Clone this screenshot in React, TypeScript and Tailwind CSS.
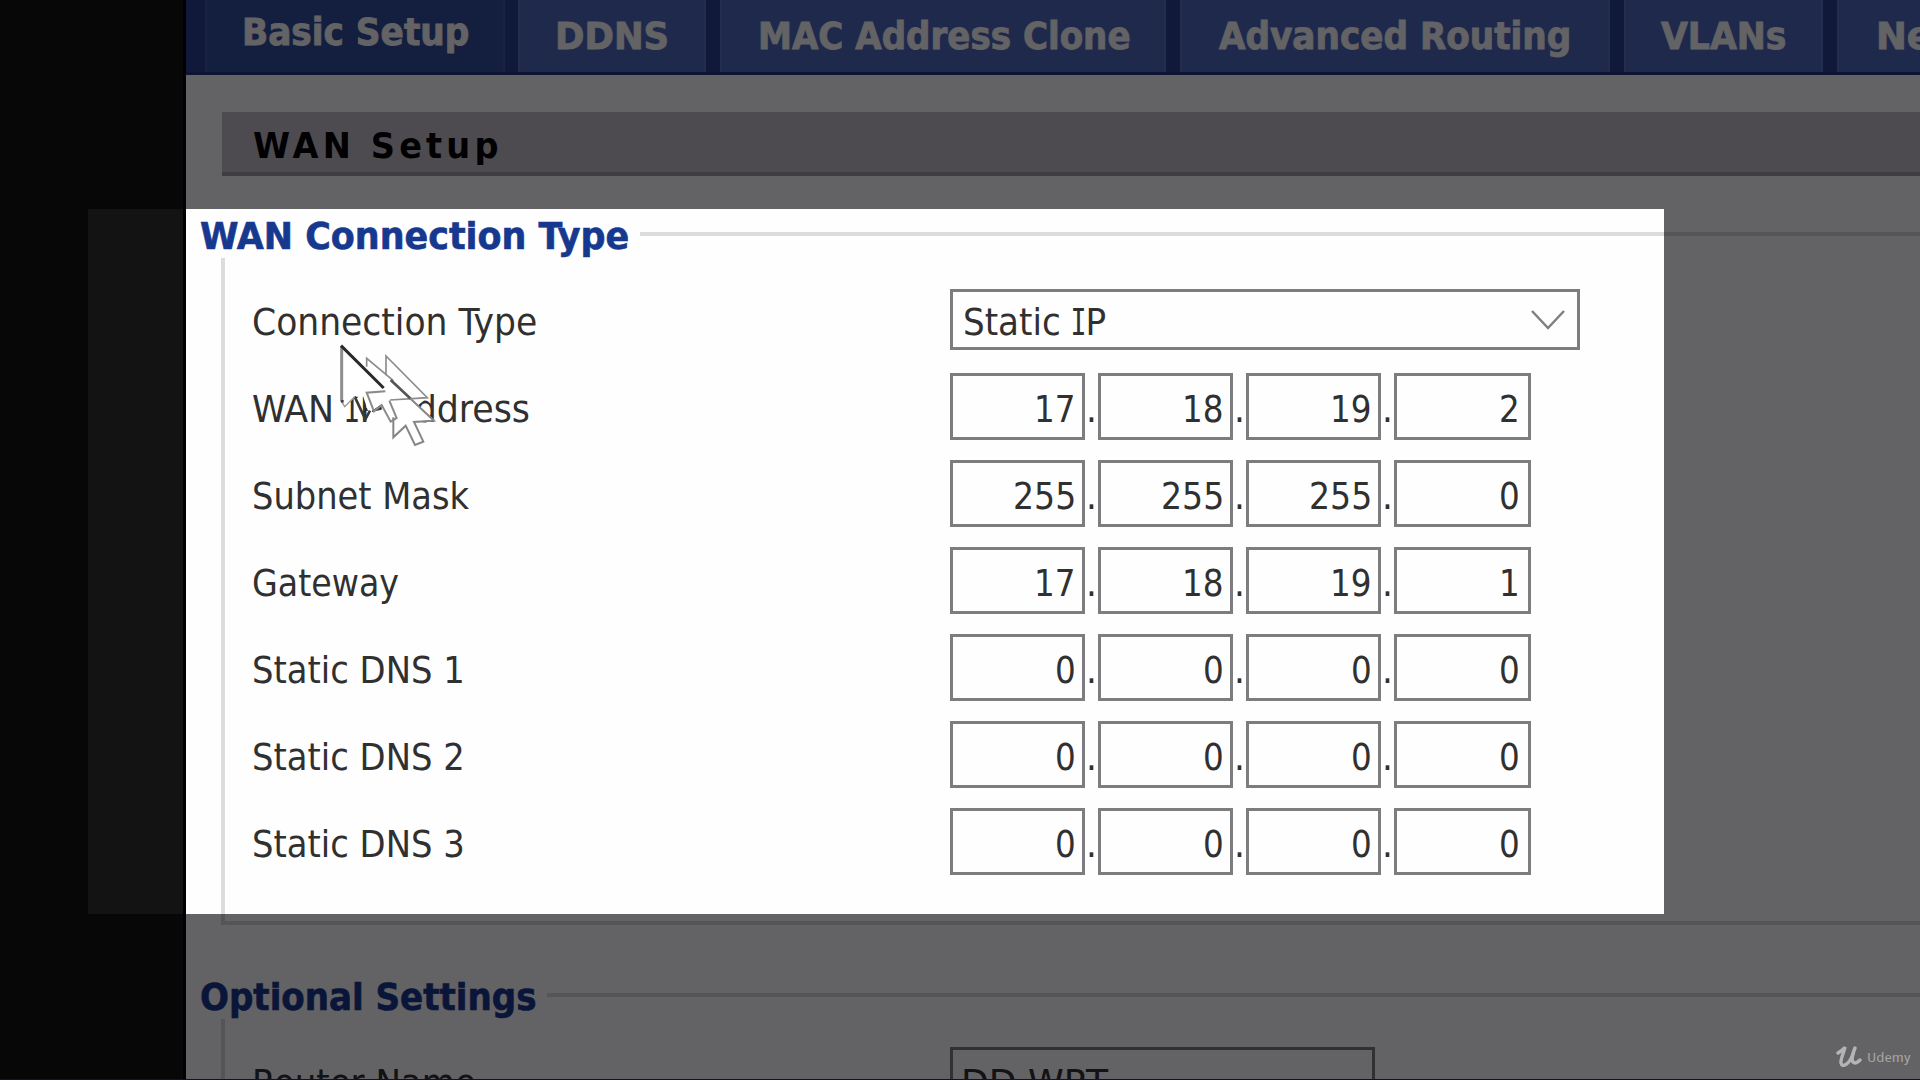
import { ReactNode, useLayoutEffect, useRef, useState } from "react";

/* Text squeezed or stretched horizontally so that it fills a given width. */
function Fit({ w, className = "", children }: { w: number; className?: string; children: ReactNode }) {
  const ref = useRef<HTMLSpanElement>(null);
  const [k, setK] = useState(1);
  useLayoutEffect(() => {
    if (ref.current) setK(w / ref.current.offsetWidth);
  }, [w]);
  return (
    <span className={"block shrink-0 whitespace-nowrap " + className} style={{ width: w }}>
      <span ref={ref} className="inline-block origin-left" style={{ transform: `scaleX(${k})` }}>
        {children}
      </span>
    </span>
  );
}

/* Capital I with serifs, as in Tahoma. */
function SerifI() {
  return (
    <span className="inline-flex w-[14px] justify-center">
      <span className="inline-block scale-x-[0.7] font-['DejaVu_Sans_Mono',monospace]">I</span>
    </span>
  );
}

const tabs = [
  { label: "DDNS", w: 188, pad: "pl-[35px]", tw: 114 },
  { label: "MAC Address Clone", w: 446, pad: "pl-[36px]", tw: 373 },
  { label: "Advanced Routing", w: 430, pad: "pl-[37px]", tw: 352 },
  { label: "VLANs", w: 199, pad: "pl-[35px]", tw: 125 },
  { label: "Networking", w: 300, pad: "pl-[37px]", tw: 240 },
];

function Tabs() {
  return (
    <nav className="flex h-[75px] w-[1734px] shrink-0 gap-[14px] overflow-hidden border-b-[3px] border-[#1d3a80] bg-[#274190] font-bold text-white [-webkit-text-stroke:0.8px_white]">
      <div className="-mr-px ml-[19px] h-full w-[300px] shrink-0 border-x-2 border-[#4059a0] bg-[#334f9c] pl-[35px] text-[37px] leading-[66px]">
        <Fit w={227}>Basic Setup</Fit>
      </div>
      {tabs.map((t) => (
        <div
          key={t.label}
          className={"h-full shrink-0 border-x-2 border-[#5b76c4] bg-[#4e6cc0] text-[37px] leading-[74px] " + t.pad}
          style={{ width: t.w }}
        >
          <Fit w={t.tw}>{t.label}</Fit>
        </div>
      ))}
    </nav>
  );
}

function Legend({ w, children }: { w: number; children: ReactNode }) {
  return (
    <div className="flex h-[49px] shrink-0 items-center pl-[14px]">
      <Fit
        w={w}
        className="pt-[5px] text-[38px] font-bold leading-[44px] text-[#17388f] [-webkit-text-stroke:0.6px_#17388f]"
      >
        {children}
      </Fit>
      <div className="ml-[11px] h-[4px] flex-1 bg-[#dddbde]" />
    </div>
  );
}

function Row({ label, w, children }: { label: ReactNode; w: number; children: ReactNode }) {
  return (
    <div className="flex h-[87px] shrink-0 items-center pl-[27px]">
      <div className="w-[698px] shrink-0 pt-[4px] text-[38px] leading-[48px]">
        <Fit w={w}>{label}</Fit>
      </div>
      {children}
    </div>
  );
}

const digitWidths = [0, 21, 42, 63];

function Octets({ values }: { values: string[] }) {
  return (
    <div className="flex">
      {values.map((v, i) => (
        <div key={i} className="flex">
          <div
            className={
              "flex h-[67px] justify-end border-[3px] border-[#7d7d7f] pt-[5px] text-[38px] leading-[56px] " +
              (i === 3 ? "w-[137px] pr-[8px]" : "w-[135px] pr-[6px]")
            }
          >
            <Fit w={digitWidths[v.length]}>{v}</Fit>
          </div>
          {i < 3 && <div className="w-[13px] pt-[8px] text-center text-[38px] leading-[56px]">.</div>}
        </div>
      ))}
    </div>
  );
}

const rows: { label: ReactNode; w: number; values: string[] }[] = [
  { label: <>WAN <SerifI />P Address</>, w: 278, values: ["17", "18", "19", "2"] },
  { label: "Subnet Mask", w: 217, values: ["255", "255", "255", "0"] },
  { label: "Gateway", w: 147, values: ["17", "18", "19", "1"] },
  { label: "Static DNS 1", w: 213, values: ["0", "0", "0", "0"] },
  { label: "Static DNS 2", w: 213, values: ["0", "0", "0", "0"] },
  { label: "Static DNS 3", w: 213, values: ["0", "0", "0", "0"] },
];

/* Mouse pointer with its motion trail. */
function PointerTrail() {
  return (
    <svg className="absolute left-[336px] top-[340px]" width="100" height="110" viewBox="228 30 300 330" fill="none">
      <path d="M242 48 V218 L256 230 L284 200 L310 200 L330 262 L344 246 L364 226 L392 275 L420 270 L502 203 L378 78 V130 L320 85Z" fill="#fff" />
      <path d="M392 150 L522 270 L462 275 L490 335 L465 345 L437 287 L400 322 L388 212Z" fill="#fff" />
      <path d="M284 200 L316 268 L330 242" stroke="#3a3a3a" strokeWidth="8" />
      <path d="M336 244 L362 226 L364 238Z" fill="#333" stroke="#333" strokeWidth="3" />
      <path d="M320 110 V85 L400 152" stroke="#8c8c8c" strokeWidth="5" />
      <path d="M378 136 V78 L502 203 L390 210" stroke="#8c8c8c" strokeWidth="5" />
      <path d="M245 50 V215" stroke="#8e8e8e" strokeWidth="9" />
      <path d="M241 208 L254 230 L284 200" stroke="#999" strokeWidth="4" />
      <path d="M243 210 h8 v8 h-8Z" fill="#444" />
      <path d="M376 184 L320 188 L342 244 L365 225 L392 275 L410 264 L388 212" stroke="#8a8a8a" strokeWidth="6" />
      <path d="M243 47 L371 174" stroke="#2a2a2a" strokeWidth="9" />
      <path d="M392 150 L452 206" stroke="#555" strokeWidth="8" />
      <path d="M450 205 L522 272 L462 276 L490 335 L465 345 L437 287 L400 322 V262" stroke="#868686" strokeWidth="6" />
    </svg>
  );
}

export default function App() {
  return (
    <div className="relative flex h-[1080px] w-[1920px] overflow-hidden bg-[#121312] font-['DejaVu_Sans_Condensed','DejaVu_Sans',sans-serif] [font-stretch:condensed] text-[#303030]">
      <div className="h-full w-[186px] shrink-0 border-r-[3px] border-black" />
      <main className="flex h-full w-[1734px] shrink-0 flex-col overflow-hidden bg-[#fefefe]">
        <Tabs />
        <div className="ml-[36px] mt-[37px] h-[64px] shrink-0 border-b-4 border-[#9f9f9f] bg-[#c7c4c8] pl-[31px] pt-[3px] text-[36px] font-bold leading-[62px] text-black">
          <Fit w={250} className="tracking-[4px]">WAN Setup</Fit>
        </div>
        <div className="h-[33px] shrink-0" />

        <Legend w={429}>WAN Connection Type</Legend>
        <section className="ml-[35px] flex h-[667px] shrink-0 flex-col border-b-4 border-l-[4px] border-[#dddbde] pt-[18px]">
          <Row label="Connection Type" w={285}>
            <div className="flex h-[61px] w-[630px] items-center justify-between border-[3px] border-[#7d7d7f] pl-[10px] pr-[11px] text-[38px] leading-[56px]">
              <Fit w={143} className="pt-[5px]">
                Static <SerifI />P
              </Fit>
              <svg width="36" height="24" viewBox="0 0 36 24" fill="none" stroke="#808080" strokeWidth="2.5">
                <path d="M2 3 L18 20 L34 3" />
              </svg>
            </div>
          </Row>
          {rows.map((r, i) => (
            <Row key={i} label={r.label} w={r.w}>
              <Octets values={r.values} />
            </Row>
          ))}
        </section>

        <div className="h-[45px] shrink-0" />
        <Legend w={336}>Optional Settings</Legend>
        <section className="ml-[35px] flex shrink-0 flex-col border-l-[4px] border-[#dddbde] pt-[18px]">
          <Row label="Router Name" w={224}>
            <div className="h-[67px] w-[425px] border-[3px] border-[#7d7d7f] pl-[8px] pt-[5px] text-[38px] leading-[56px]">
              <Fit w={147}>DD-WRT</Fit>
            </div>
          </Row>
        </section>
      </main>

      <PointerTrail />

      {/* Spotlight: everything outside this box is dimmed */}
      <div className="absolute left-[88px] top-[209px] h-[705px] w-[1576px] shadow-[0_0_0_2000px_rgba(1,0,3,0.615)]" />

      <div className="absolute bottom-[11px] right-[9px] flex items-center gap-[5px] text-[#b4b3b6]">
        <svg width="26" height="24" viewBox="0 0 26 24" fill="none" stroke="currentColor" strokeLinecap="round">
          <path d="M2 8 C5 6 8 4 9 2 C8 8 4 14 5 18 C6 23 13 20 17 9" strokeWidth="3.4" />
          <path d="M19 3 C17 8 15 14 17 17 C19 19 22 17 24 15" strokeWidth="3.4" />
        </svg>
        <Fit w={44} className="text-[13px] leading-[20px] font-['Open_Sans',sans-serif] text-[#a3a2a5]">Udemy</Fit>
      </div>
      <div className="absolute bottom-0 left-0 h-px w-full bg-[#15141c]" />
    </div>
  );
}
